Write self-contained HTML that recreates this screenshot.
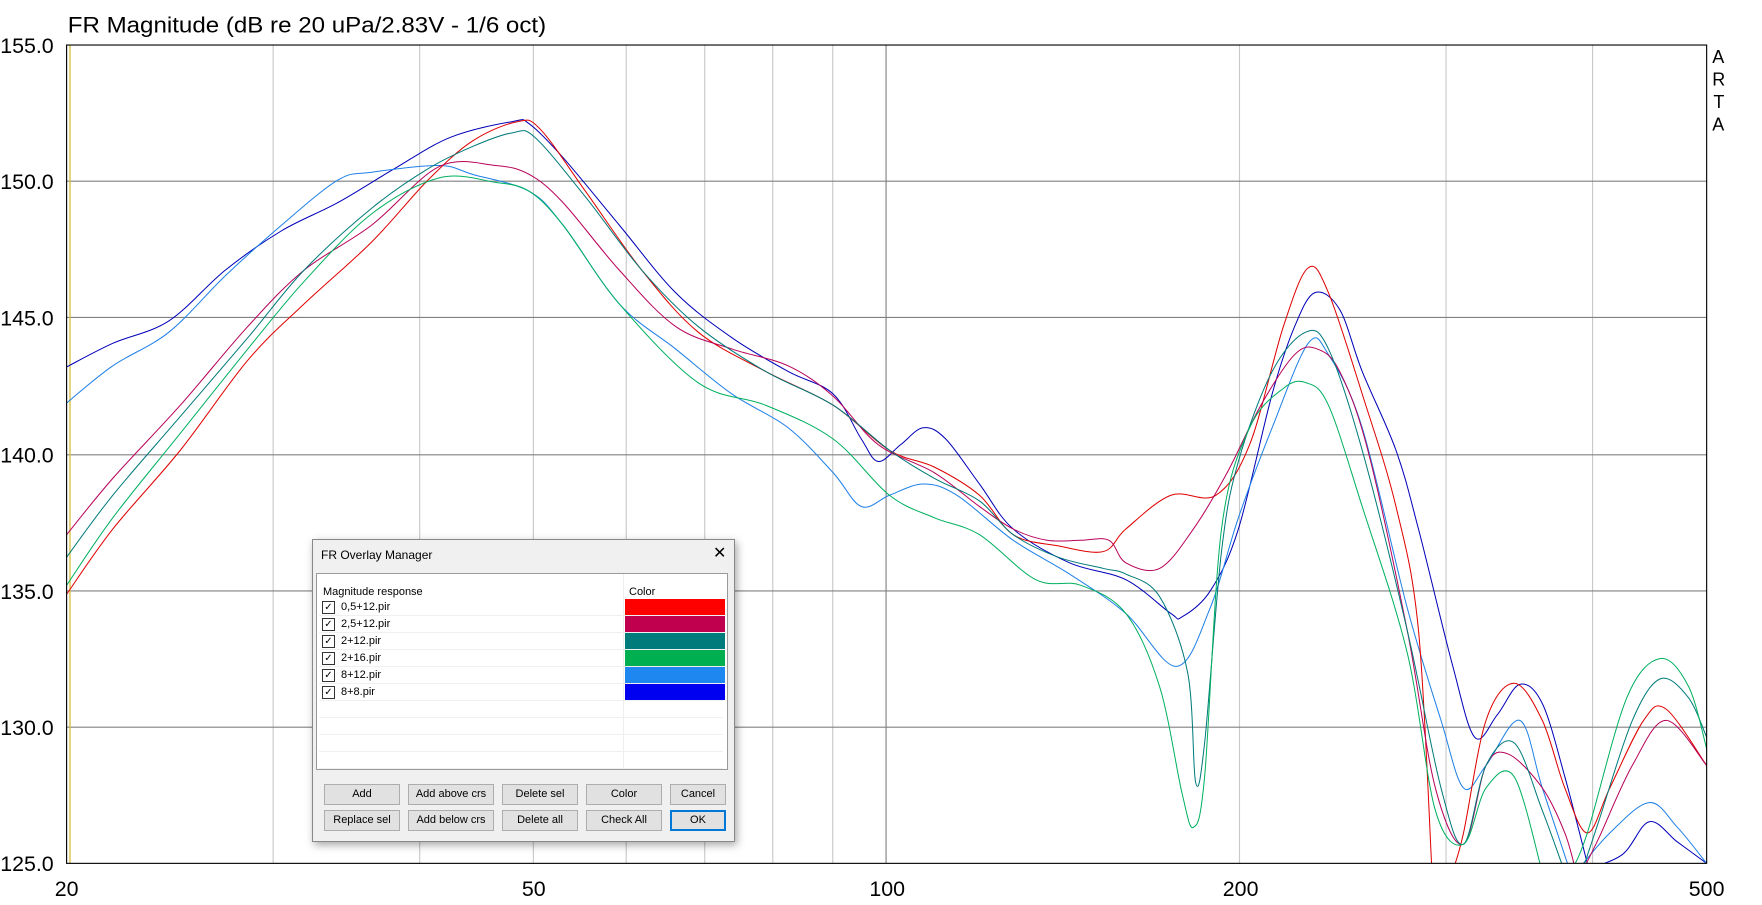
<!DOCTYPE html>
<html><head><meta charset="utf-8"><style>
html,body{margin:0;padding:0;background:#fff;width:1762px;height:905px;overflow:hidden;font-family:"Liberation Sans",sans-serif}
#dlg{position:absolute;left:312px;top:539px;width:421px;height:301px;background:#f0f0f0;border:1px solid #888;box-shadow:2px 3px 8px rgba(0,0,0,.35);font-size:11px;color:#000}
#dlg .t{position:absolute;left:8px;top:8px;font-size:12px}
#dlg .x{position:absolute;left:400px;top:3px;font-size:16px}
#lb{position:absolute;left:3px;top:33px;width:410px;height:195px;background:#fff;border:1px solid #999}
.hd{position:absolute;top:12px;font-size:11px}
.row{position:absolute;left:2px;width:404px;height:16px;border-bottom:1px solid #f0f0f0}
.cb{position:absolute;left:3px;top:2px;width:11px;height:11px;border:1px solid #333;font-size:10px;line-height:11px;text-align:center}
.nm{position:absolute;left:22px;top:2px}
.sw{position:absolute;left:306px;top:0;width:100px;height:16px}
.btn{position:absolute;width:74px;height:19px;background:#e1e1e1;border:1px solid #adadad;text-align:center;line-height:19px;font-size:11px}
</style></head><body>
<svg id="plot" width="1762" height="905" viewBox="0 0 1565 804" style="position:absolute;left:0;top:0">
<defs><clipPath id="c"><rect x="59" y="40" width="1457" height="727"/></clipPath></defs>
<g id="grid" stroke="#c8c8c8" stroke-width="1"></g>
<g stroke="#808080" stroke-width="1">
<line x1="59" y1="161" x2="1516" y2="161"/><line x1="59" y1="282" x2="1516" y2="282"/><line x1="59" y1="404" x2="1516" y2="404"/><line x1="59" y1="525" x2="1516" y2="525"/><line x1="59" y1="646" x2="1516" y2="646"/>
<line x1="787" y1="40" x2="787" y2="767"/>
</g>
<line x1="62" y1="40" x2="62" y2="767" stroke="#d8c040" stroke-width="1.2"/>
<g id="curves" clip-path="url(#c)" fill="none" stroke-width="0.9"></g>
<rect x="59" y="40" width="1457" height="727" fill="none" stroke="#000" stroke-width="1"/>
<g font-family="Liberation Sans, sans-serif" font-size="19" fill="#000">
<text x="60" y="29" font-size="20" textLength="425" lengthAdjust="spacingAndGlyphs">FR Magnitude (dB re 20 uPa/2.83V - 1/6 oct)</text>
<text x="0" y="47">155.0</text><text x="0" y="168">150.0</text><text x="0" y="289">145.0</text><text x="0" y="411">140.0</text><text x="0" y="532">135.0</text><text x="0" y="653">130.0</text><text x="0" y="774">125.0</text>
<text x="59" y="796" text-anchor="middle">20</text><text x="474" y="796" text-anchor="middle">50</text><text x="788" y="796" text-anchor="middle">100</text><text x="1102" y="796" text-anchor="middle">200</text><text x="1516" y="796" text-anchor="middle">500</text>
<g font-size="16"><text x="1521" y="56">A</text><text x="1521" y="76">R</text><text x="1522" y="96">T</text><text x="1521" y="116">A</text></g>
</g>
</svg>
<div id="dlg">
<div class="t">FR Overlay Manager</div><div class="x">✕</div>
<div id="lb">
<div class="hd" style="left:6px">Magnitude response</div><div class="hd" style="left:312px">Color</div>
<div style="position:absolute;left:306px;top:0;width:1px;height:195px;background:#eee"></div>
</div>
<div class="btn" style="left:11px;top:244px">Add</div>
<div class="btn" style="left:95px;top:244px;width:84px">Add above crs</div>
<div class="btn" style="left:189px;top:244px">Delete sel</div>
<div class="btn" style="left:273px;top:244px">Color</div>
<div class="btn" style="left:357px;top:244px;width:54px">Cancel</div>
<div class="btn" style="left:11px;top:270px">Replace sel</div>
<div class="btn" style="left:95px;top:270px;width:84px">Add below crs</div>
<div class="btn" style="left:189px;top:270px">Delete all</div>
<div class="btn" style="left:273px;top:270px">Check All</div>
<div class="btn" style="left:357px;top:270px;width:52px;border:2px solid #0078d7;height:17px;line-height:17px">OK</div>
</div>
<script>
var g=document.getElementById('grid');
[30,40,50,60,70,80,90,200,300,400].forEach(function(f){var x=59+1042*Math.log10(f/20);var l=document.createElementNS('http://www.w3.org/2000/svg','line');l.setAttribute('x1',x);l.setAttribute('x2',x);l.setAttribute('y1',40);l.setAttribute('y2',767);g.appendChild(l);});
function path(p){var d='M'+p[0][0]+','+p[0][1];for(var i=0;i<p.length-1;i++){var a=p[i-1]||p[i],b=p[i],c=p[i+1],e=p[i+2]||c;d+=' C'+(b[0]+(c[0]-a[0])/6)+','+(b[1]+(c[1]-a[1])/6)+' '+(c[0]-(e[0]-b[0])/6)+','+(c[1]-(e[1]-b[1])/6)+' '+c[0]+','+c[1];}return d;}
var C=[
['#0000b8',[[59,326],[100,305],[150,285],[200,240],[250,205],[300,180],[350,150],[400,122],[455,108],[470,110],[500,140],[550,200],[600,260],[650,300],[700,330],[740,350],[765,390],[780,410],[800,395],[820,380],[840,390],[870,430],[900,470],[950,500],[1000,515],[1040,545],[1050,548],[1075,525],[1100,470],[1130,350],[1150,290],[1168,260],[1190,275],[1210,330],[1240,400],[1260,470],[1290,590],[1310,655],[1330,635],[1350,608],[1370,625],[1390,690],[1412,775]],[[1400,775],[1440,760],[1465,730],[1490,748],[1516,767]]],
['#1e80e8',[[59,358],[100,325],[150,295],[200,245],[250,200],[300,160],[330,153],[390,147],[420,155],[470,170],[500,200],[550,270],[600,310],[650,350],[700,380],[740,420],[765,450],[790,440],[820,430],[850,440],[900,480],[950,510],[1000,545],[1045,592],[1075,540],[1100,460],[1130,380],[1162,305],[1180,315],[1210,380],[1250,540],[1280,640],[1300,700],[1320,680],[1350,640],[1370,700],[1395,775]],[[1400,775],[1430,740],[1465,713],[1490,735],[1516,767]]],
['#e00000',[[59,528],[100,470],[160,400],[220,320],[270,270],[330,215],[380,160],[420,125],[460,108],[480,115],[520,170],[570,240],[620,295],[680,330],[740,360],[790,400],[830,415],[870,440],[900,475],[940,485],[980,490],[1000,470],[1040,440],[1080,440],[1110,395],[1140,290],[1162,238],[1180,260],[1210,350],[1240,450],[1260,560],[1272,775]],[[1290,775],[1300,740],[1320,640],[1345,607],[1370,640],[1390,700],[1410,740],[1430,700],[1460,640],[1480,630],[1516,680]]],
['#b8005a',[[59,475],[100,425],[160,360],[220,290],[270,240],[330,200],[390,148],[440,147],[470,155],[500,180],[550,240],[600,290],[650,310],[700,325],[740,352],[780,395],[830,420],[870,450],[900,470],[930,480],[960,480],[985,480],[1000,500],[1030,505],[1060,470],[1090,420],[1120,360],[1150,315],[1170,310],[1190,330],[1215,400],[1250,560],[1275,700],[1300,750],[1320,680],[1340,670],[1370,700],[1390,740],[1400,775]],[[1405,775],[1420,745],[1450,680],[1480,640],[1516,680]]],
['#007a7a',[[59,495],[100,440],[160,370],[220,300],[270,240],[330,185],[380,150],[420,130],[455,118],[475,122],[520,175],[570,240],[620,290],[680,330],[740,360],[790,400],[830,425],[870,445],[900,475],[940,495],[980,505],[1000,510],[1030,530],[1055,598],[1062,695],[1070,660],[1085,490],[1100,410],[1130,330],[1160,295],[1180,310],[1210,400],[1250,560],[1280,700],[1300,750],[1320,680],[1345,660],[1370,720],[1390,775]],[[1405,775],[1420,730],[1450,640],[1475,603],[1500,620],[1516,655]]],
['#00b060',[[59,520],[100,460],[160,385],[220,310],[270,250],[330,190],[390,158],[440,162],[470,170],[500,200],[550,270],[620,340],[680,360],[740,390],[790,440],[830,460],[870,475],[920,515],[960,520],[1000,545],[1030,610],[1050,705],[1060,735],[1070,690],[1085,470],[1110,380],[1140,345],[1160,340],[1180,360],[1210,450],[1250,580],[1275,720],[1300,750],[1320,700],[1345,690],[1370,775]],[[1395,775],[1410,740],[1445,620],[1475,585],[1500,610],[1516,665]]]
];
var cg=document.getElementById('curves');
C.forEach(function(c){for(var i=1;i<c.length;i++){var p=document.createElementNS('http://www.w3.org/2000/svg','path');p.setAttribute('d',path(c[i]));p.setAttribute('stroke',c[0]);cg.appendChild(p);}});
var names=['0,5+12.pir','2,5+12.pir','2+12.pir','2+16.pir','8+12.pir','8+8.pir'],cols=['#ff0000','#c0004f','#007b7b','#00b050','#1e88f0','#0000f0'];
var lb=document.getElementById('lb');
for(var i=0;i<10;i++){var r=document.createElement('div');r.className='row';r.style.top=(25+i*17)+'px';if(i<6){r.innerHTML='<div class="cb">✓</div><div class="nm">'+names[i]+'</div><div class="sw" style="background:'+cols[i]+'"></div>';}lb.appendChild(r);}
</script>
</body></html>
